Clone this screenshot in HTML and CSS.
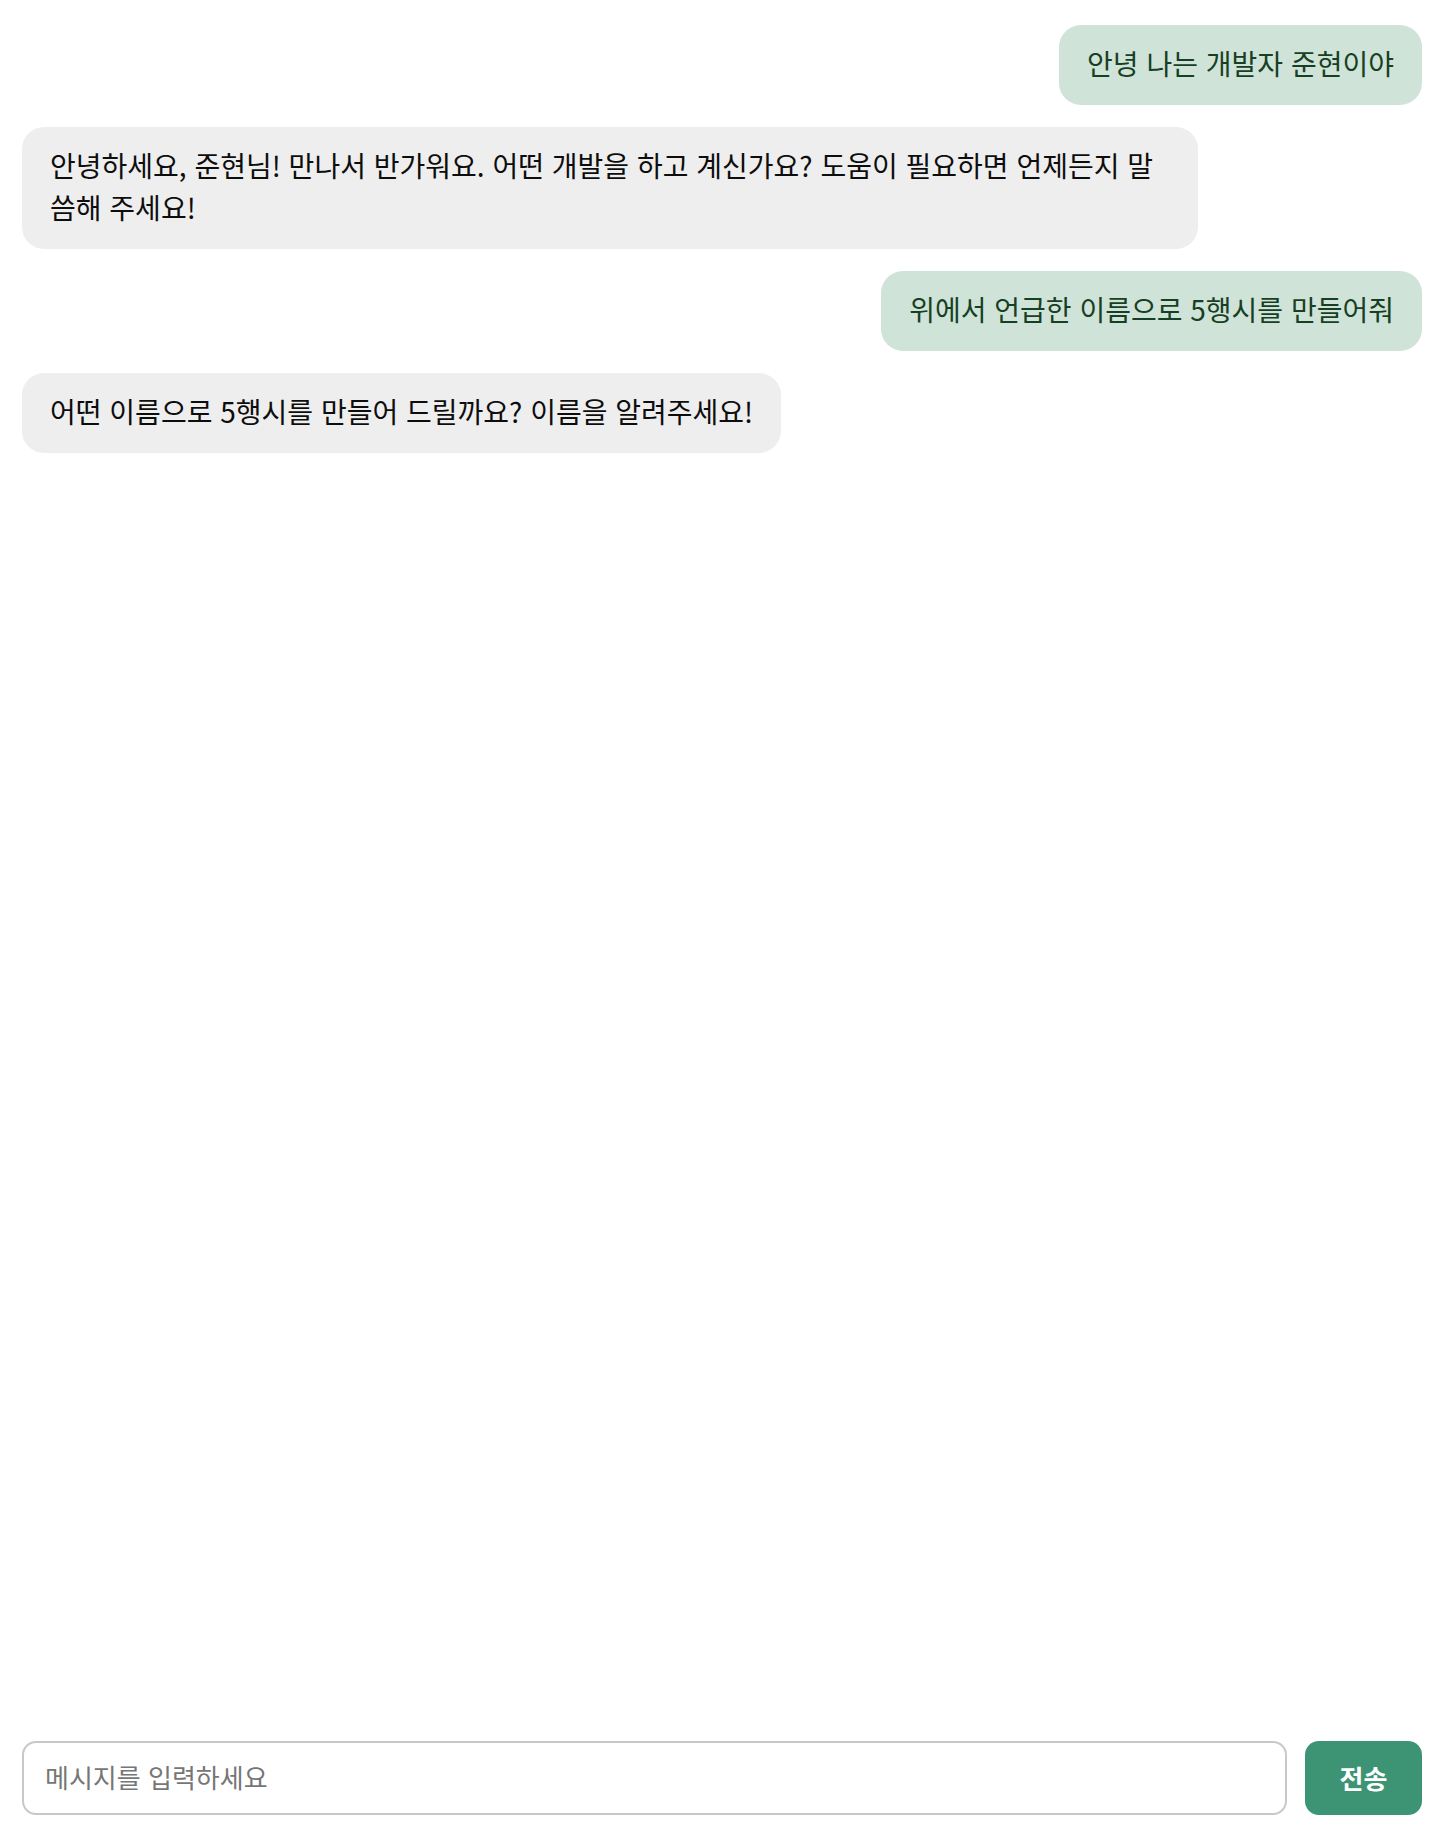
FILE: index.html
```html
<!DOCTYPE html>
<html lang="ko">
<head>
    <meta charset="UTF-8">
    <meta name="viewport" content="width=device-width, initial-scale=1.0">
    <title>채팅</title>
    <link rel="stylesheet" href="styles.css">
</head>
<body>
    <div class="chat">
        <div class="messages">
            <div class="message user">안녕 나는 개발자 준현이야</div>
            <div class="message bot">안녕하세요, 준현님! 만나서 반가워요. 어떤 개발을 하고 계신가요? 도움이 필요하면 언제든지 말씀해 주세요!</div>
            <div class="message user">위에서 언급한 이름으로 5행시를 만들어줘</div>
            <div class="message bot">어떤 이름으로 5행시를 만들어 드릴까요? 이름을 알려주세요!</div>
        </div>
        <form class="input-row" onsubmit="return false;">
            <input type="text" placeholder="메시지를 입력하세요">
            <button type="submit">전송</button>
        </form>
    </div>
</body>
</html>
```

FILE: styles.css
```css
* {
    box-sizing: border-box;
}
html, body {
    height: 100%;
}
body {
    margin: 0;
    font-family: "Noto Sans CJK KR", "Noto Sans", sans-serif;
    background: #ffffff;
    color: #111;
}
.chat {
    display: flex;
    flex-direction: column;
    height: 100vh;
    padding: 25px 22px 23px;
}
.messages {
    flex: 1;
    display: flex;
    flex-direction: column;
    gap: 22px;
}
.message {
    max-width: 84%;
    padding: 17px 28px 21px;
    font-size: 28px;
    line-height: 42px;
    border-radius: 22px;
}
.message.user {
    align-self: flex-end;
    background: #cfe3d9;
    color: #173f23;
}
.message.bot {
    align-self: flex-start;
    background: #eeeeee;
    color: #0d0d0d;
}
.input-row {
    display: flex;
    gap: 18px;
    margin: 0;
}
.input-row input {
    flex: 1;
    height: 74px;
    padding: 0 21px 3px;
    border: 2px solid #c8c8c8;
    border-radius: 14px;
    font-family: inherit;
    font-size: 26px;
    color: #111;
    outline: none;
}
.input-row input::placeholder {
    color: #767676;
}
.input-row button {
    width: 117px;
    height: 74px;
    padding-bottom: 3px;
    border: none;
    border-radius: 14px;
    background: #3d9474;
    color: #fff;
    font-family: inherit;
    font-size: 26px;
    font-weight: bold;
    cursor: pointer;
}
```
